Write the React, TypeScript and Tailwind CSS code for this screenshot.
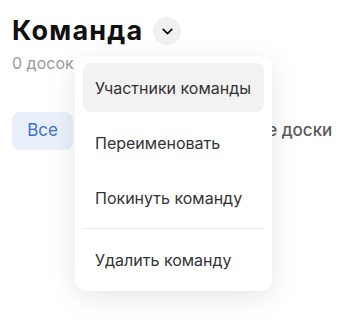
import { ChevronDown } from "lucide-react";

const menuItems = ["Участники команды", "Переименовать", "Покинуть команду"];

export default function App() {
  return (
    <div className="relative h-[326px] w-[347px] overflow-hidden bg-white font-['Inter',sans-serif]">
      <div className="px-3 pt-[15px]">
        <div className="flex items-center gap-[10px]">
          <h1 className="text-[27px] font-bold leading-8 tracking-[1.2px] text-[#111]">Команда</h1>
          <button className="flex h-7 w-7 items-center justify-center rounded-full bg-[#f1f1f1]">
            <ChevronDown size={17} strokeWidth={2.6} className="text-[#111]" />
          </button>
        </div>
        <div className="mt-[6px] text-[16px] leading-5 text-[#9a9a9a]">0 досок</div>

        <div className="mt-[39px] flex items-center gap-2 whitespace-nowrap">
          <button className="h-[38px] w-[61px] shrink-0 rounded-lg bg-[#e9f0fc] text-[17px] text-[#3d6fd1]">Все</button>
          <button className="h-[38px] shrink-0 px-4 text-[17px] font-medium text-[#5a5a5a]">Мои доски</button>
          <button className="h-[38px] shrink-0 pl-[7px] text-[17px] font-medium text-[#5a5a5a]">Общие доски</button>
        </div>
      </div>

      <div className="absolute left-[75px] top-[56px] w-[197px] rounded-xl bg-white px-2 py-[7px] shadow-[0_6px_28px_rgba(0,0,0,0.1)]">
        <div className="flex flex-col gap-[6px]">
          {menuItems.map((item, i) => (
            <div
              key={item}
              className={`flex h-[49px] items-center rounded-lg px-3 text-[16px] text-[#333] ${i === 0 ? "bg-[#f2f2f2]" : ""}`}
            >
              {item}
            </div>
          ))}
        </div>
        <div className="my-[6px] h-px bg-[#ececec]" />
        <div className="flex h-[49px] items-center rounded-lg px-3 text-[16px] text-[#333]">Удалить команду</div>
      </div>
    </div>
  );
}
